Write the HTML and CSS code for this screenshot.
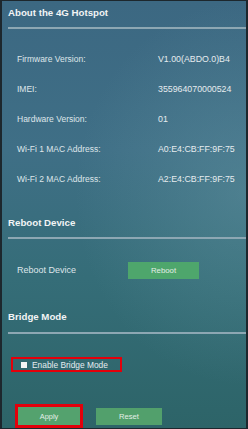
FILE: index.html
```html
<!DOCTYPE html>
<html lang="en">
  <head>
    <meta charset="UTF-8" />
    <meta name="viewport" content="width=device-width, initial-scale=1.0" />
    <title>Device Information</title>
    <link rel="stylesheet" href="styles.css">
  </head>
  <body>
    <div class="frame">
      <div class="panel">
        <div class="section">
          <h2 class="section-title">About the 4G Hotspot</h2>
          <div class="divider"></div>
          <div class="info-list">
            <div class="info-row">
              <span class="info-label">Firmware Version:</span>
              <span class="info-value">V1.00(ABDO.0)B4</span>
            </div>
            <div class="info-row">
              <span class="info-label">IMEI:</span>
              <span class="info-value">355964070000524</span>
            </div>
            <div class="info-row">
              <span class="info-label">Hardware Version:</span>
              <span class="info-value">01</span>
            </div>
            <div class="info-row">
              <span class="info-label">Wi-Fi 1 MAC Address:</span>
              <span class="info-value">A0:E4:CB:FF:9F:75</span>
            </div>
            <div class="info-row">
              <span class="info-label">Wi-Fi 2 MAC Address:</span>
              <span class="info-value">A2:E4:CB:FF:9F:75</span>
            </div>
          </div>
        </div>

        <div class="section section-reboot">
          <h2 class="section-title">Reboot Device</h2>
          <div class="divider"></div>
          <div class="reboot-row">
            <span class="info-label">Reboot Device</span>
            <button type="button" class="btn btn-reboot">Reboot</button>
          </div>
        </div>

        <div class="section section-bridge">
          <h2 class="section-title">Bridge Mode</h2>
          <div class="divider"></div>
          <label class="bridge-option highlight">
            <span class="check-box"></span>
            <span>Enable Bridge Mode</span>
          </label>
          <div class="actions">
            <span class="highlight-thick">
              <button type="button" class="btn btn-apply">Apply</button>
            </span>
            <button type="button" class="btn btn-reset">Reset</button>
          </div>
        </div>
      </div>
    </div>
  </body>
</html>
```

FILE: styles.css
```css
* {
  margin: 0;
  padding: 0;
  box-sizing: border-box;
}

body {
  font-family: "Liberation Sans", Arial, sans-serif;
  background-color: #1d272d;
}

.frame {
  width: 248px;
  height: 429px;
  padding: 1px 2px 1px 2px;
  background-color: #1d272d;
}

.panel {
  height: 100%;
  overflow: hidden;
  padding-top: 5px;
  background:
    radial-gradient(ellipse 70% 45% at 100% 45%, rgba(110, 160, 170, 0.35), rgba(110, 160, 170, 0) 100%),
    linear-gradient(180deg, #3c6882 0%, #3f6f86 35%, #356d78 65%, #2d6468 100%);
}

.section-title {
  font-size: 9.7px;
  font-weight: bold;
  line-height: 14px;
  color: #f2f4f5;
  padding-left: 6px;
}

.divider {
  height: 2px;
  margin: 7px 0 0 6px;
  background-color: #8da7b3;
}

.info-list {
  margin-top: 15px;
}

.info-row,
.reboot-row {
  display: flex;
  align-items: center;
  height: 30px;
  padding-left: 15px;
}

.info-label {
  width: 141px;
  font-size: 8.5px;
  color: #dfe6ea;
}

.info-value {
  font-size: 8.8px;
  color: #e6ecef;
}

.section-reboot {
  margin-top: 22px;
}

.reboot-row {
  margin-top: 16px;
}

.reboot-row .info-label {
  width: 111px;
  font-size: 9px;
}

.btn {
  border: none;
  font-family: inherit;
  color: #e4eee7;
  cursor: pointer;
}

.btn-reboot {
  width: 71px;
  height: 17px;
  font-size: 7.8px;
  background-color: #4ea66c;
}

.section-bridge {
  margin-top: 25px;
}

.section-bridge .divider {
  margin-top: 8px;
}

.highlight {
  border: 2px solid #e3000b;
}

.bridge-option {
  display: flex;
  align-items: center;
  gap: 5px;
  width: 111px;
  height: 15px;
  margin: 23px 0 0 9px;
  padding-left: 8px;
  font-size: 8.4px;
  color: #e6ecef;
}

.check-box {
  width: 6px;
  height: 6px;
  background-color: #f4f4f4;
}

.actions {
  display: flex;
  align-items: center;
  gap: 13px;
  margin: 32px 0 0 13px;
}

.highlight-thick {
  display: block;
  border: 3px solid #e3000b;
}

.btn-apply {
  display: block;
  width: 62px;
  height: 18px;
  font-size: 7.4px;
  background-color: #54a26e;
}

.btn-reset {
  width: 66px;
  height: 17px;
  font-size: 7.6px;
  background-color: #52a06c;
  margin-top: 1px;
}
```
